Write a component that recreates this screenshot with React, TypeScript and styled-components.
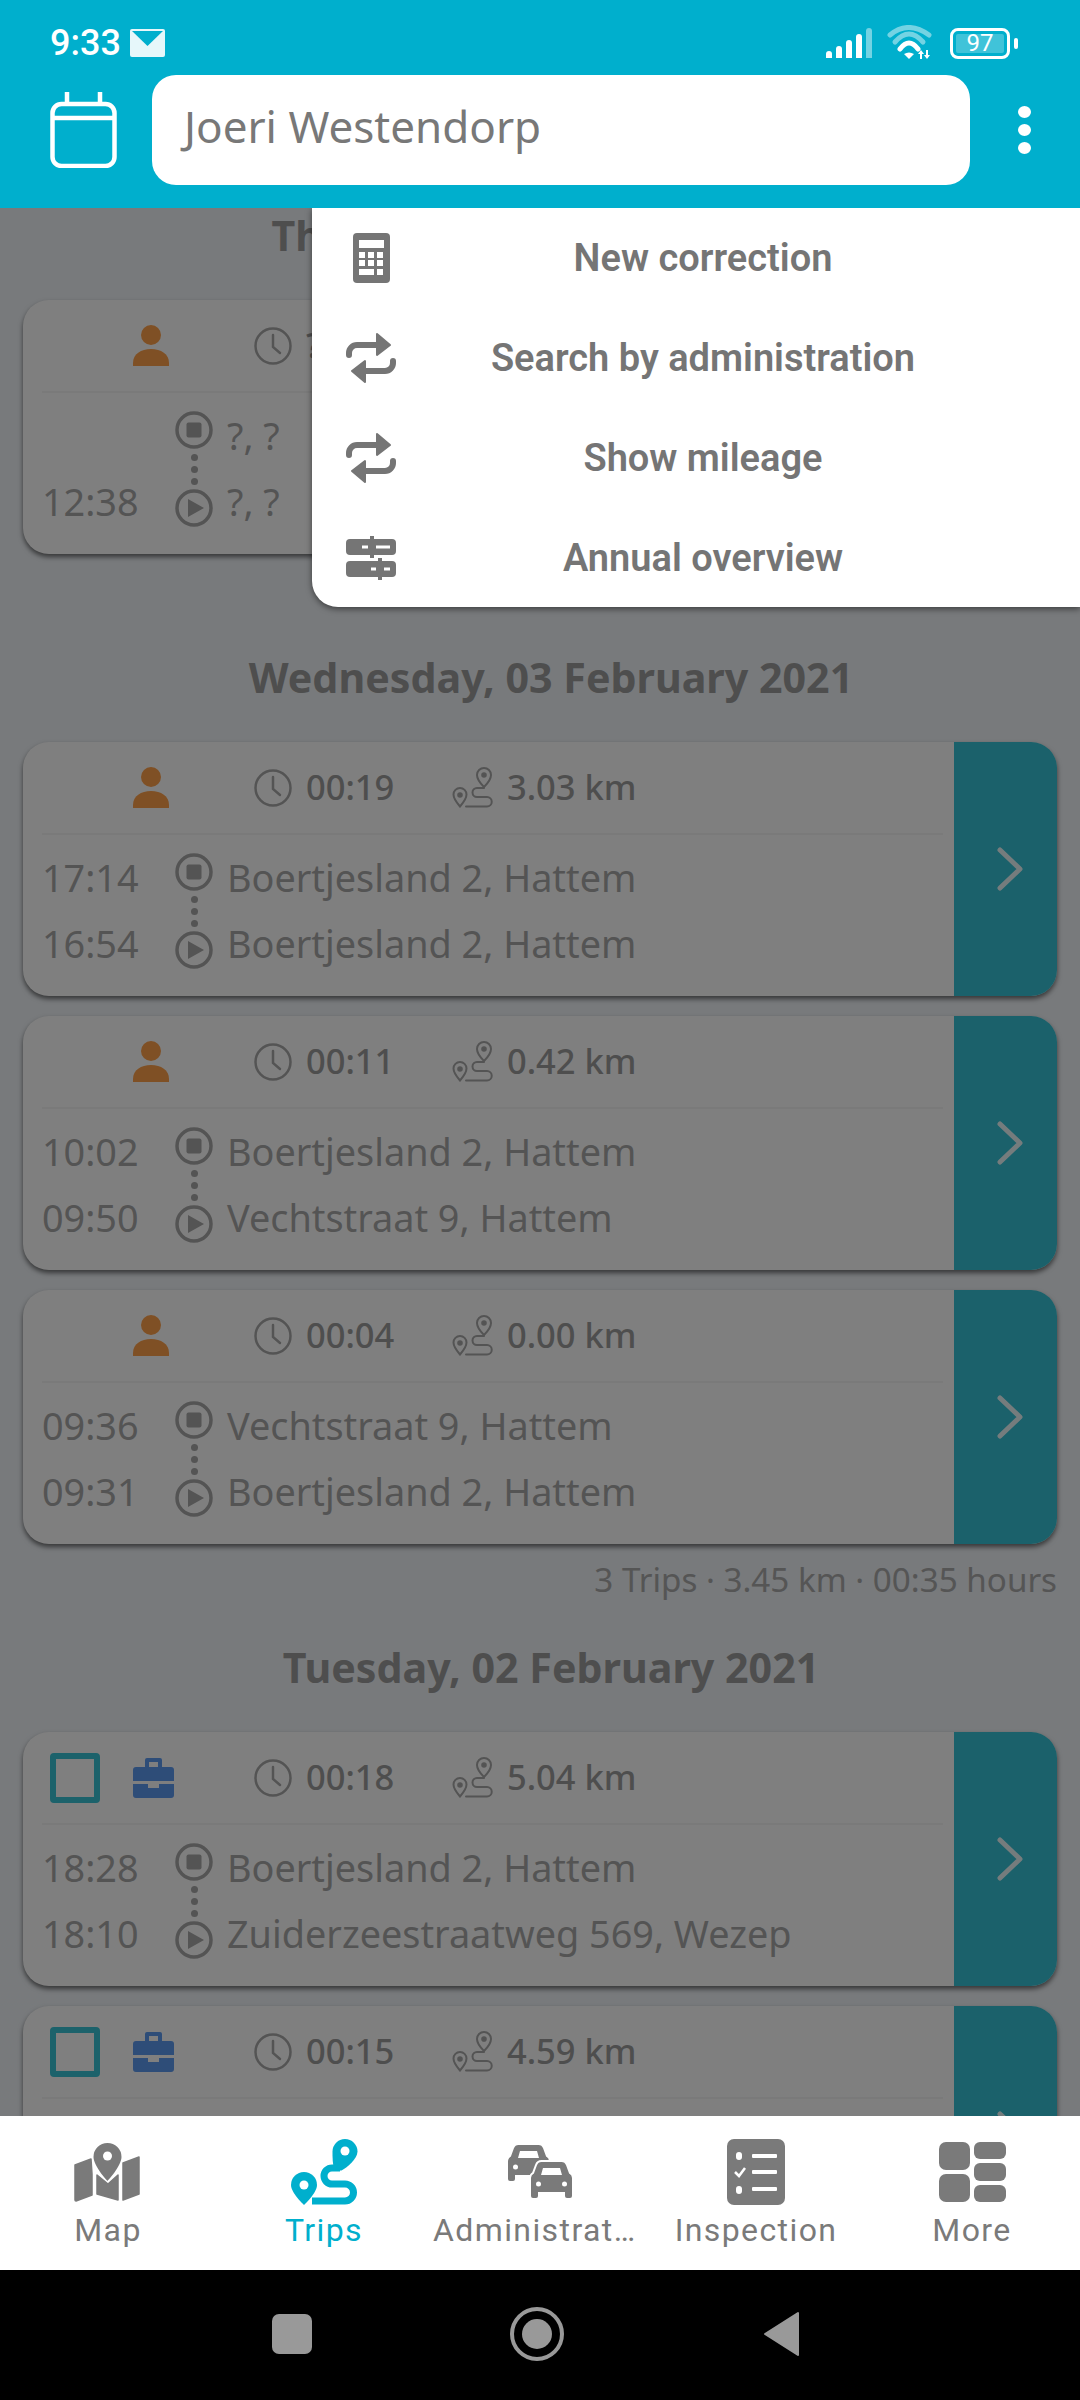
import styled, { createGlobalStyle } from 'styled-components';

const GlobalStyle = createGlobalStyle`
  * { box-sizing: border-box; }
  html, body { margin: 0; padding: 0; background: #000; }
`;

const Screen = styled.div`
  width: 1080px;
  height: 2400px;
  display: flex;
  flex-direction: column;
  overflow: hidden;
  font-family: "Noto Sans", "Open Sans", sans-serif;
`;

/* header */
const Header = styled.header`
  height: 208px;
  flex: none;
  background: #00afcd;
  color: #fff;
`;

const StatusBar = styled.div`
  height: 75px;
  display: flex;
  align-items: center;
  padding: 11px 70px 0 50px;
  font-family: Roboto, sans-serif;
  font-weight: 500;
  font-size: 36px;

  .clock { margin-right: 9px; }
  .spacer { flex: 1; }
`;

const SignalBars = styled.div`
  display: flex;
  align-items: flex-end;
  gap: 4px;
  height: 30px;
  margin-right: 14px;
`;

const Bar = styled.i<{ $h: number; $dim?: boolean }>`
  width: 6px;
  height: ${(p) => p.$h}px;
  border-radius: 3px 3px 0 0;
  background: ${(p) => (p.$dim ? 'rgba(255,255,255,0.45)' : '#fff')};
`;

const Battery = styled.div`
  position: relative;
  width: 60px;
  height: 31px;
  margin-left: 14px;
  padding: 3px;
  border: 3px solid #fff;
  border-radius: 8px;

  &::after {
    content: '';
    position: absolute;
    right: -11px;
    top: 7px;
    width: 4px;
    height: 11px;
    border-radius: 2px;
    background: #fff;
  }
`;

const BatteryLevel = styled.div`
  height: 100%;
  background: rgba(255, 255, 255, 0.25);
  border-radius: 2px;
  text-align: center;
  font-size: 24px;
  line-height: 19px;
  font-weight: 400;
`;

const Toolbar = styled.div`
  height: 110px;
  display: flex;
  align-items: center;
  padding-left: 50px;
`;

const SearchBox = styled.div`
  width: 818px;
  height: 110px;
  margin-left: 35px;
  padding: 0 0 8px 32px;
  display: flex;
  align-items: center;
  background: #fff;
  border-radius: 24px;
  color: #787878;
  font-size: 44px;
`;

const Kebab = styled.div`
  margin-left: 48px;
  display: flex;
  flex-direction: column;
  gap: 6px;

  i {
    display: block;
    width: 13px;
    height: 12px;
    border-radius: 50%;
    background: #fff;
  }
`;

/* trip list */
const Body = styled.main`
  position: relative;
  flex: 1;
  min-height: 0;
  overflow: hidden;
  background: #f0f4f8;
`;

const TripList = styled.div`
  margin-top: -1px;
`;

const DayTitle = styled.h2`
  margin: 0 0 33px;
  padding-left: 22px;
  height: 60px;
  line-height: 56px;
  text-align: center;
  font-size: 41.2px;
  font-weight: 700;
  color: #9c9c9c;
`;

const DaySummary = styled.div`
  height: 75px;
  padding-right: 23px;
  line-height: 32px;
  text-align: right;
  font-size: 33.2px;
  color: #aaa;
`;

const Card = styled.article`
  height: 254px;
  margin: 0 23px 20px;
  display: flex;
  overflow: hidden;
  background: #fff;
  border-radius: 26px;
  box-shadow: 0 3px 5px rgba(0, 0, 0, 0.55);
`;

const CardMain = styled.div`
  flex: 1;
  min-width: 0;
`;

const CardTop = styled.div`
  height: 91px;
  display: flex;
  align-items: center;
  padding-left: 27px;
`;

const CheckSlot = styled.div`
  width: 50px;
  height: 50px;
  margin-right: 33px;
`;

const CheckBox = styled.div`
  width: 50px;
  height: 50px;
  border: 6px solid #38c4d6;
  border-radius: 4px;
`;

const TypeSlot = styled.div`
  width: 41px;
  margin-right: 80px;
  display: flex;
`;

const Stat = styled.span<{ $width?: number }>`
  width: ${(p) => (p.$width ? `${p.$width}px` : 'auto')};
  margin: 0 0 2px 14px;
  font-size: 34.5px;
  font-weight: 500;
  color: #9c9c9c;
  white-space: nowrap;
`;

const Divider = styled.div`
  height: 2px;
  margin: 0 11px 0 19px;
  background: #f5f5f5;
`;

const Route = styled.div`
  display: grid;
  grid-template-columns: 133px 38px 1fr;
  grid-template-rows: 66px 66px;
  padding: 9px 0 0 19px;
  font-size: 37.8px;
  color: #a8a8a8;
`;

const RouteCell = styled.div`
  display: flex;
  align-items: center;
  white-space: nowrap;
`;

const Address = styled(RouteCell)`
  padding-left: 14px;
`;

const Markers = styled.div`
  grid-column: 2;
  grid-row: 1 / span 2;
  padding-top: 9px;
  display: flex;
  flex-direction: column;
  align-items: center;
  color: #a8a8a8;
`;

const Dots = styled.div`
  height: 40px;
  display: flex;
  flex-direction: column;
  justify-content: center;
  gap: 5px;

  i {
    display: block;
    width: 7px;
    height: 7px;
    border-radius: 50%;
    background: currentColor;
  }
`;

const CardAction = styled.div`
  width: 103px;
  flex: none;
  display: flex;
  align-items: center;
  justify-content: center;
  padding-left: 8px;
  background: #36c2d6;
  color: #fff;
`;

/* dim layer and menu */
const Scrim = styled.div`
  position: absolute;
  inset: 0;
  background: rgba(0, 0, 0, 0.5);
`;

const Menu = styled.nav`
  position: absolute;
  top: 0;
  right: 0;
  width: 768px;
  height: 399px;
  background: #fff;
  border-radius: 0 0 0 26px;
  box-shadow: 0 2px 6px rgba(0, 0, 0, 0.5);
`;

const MenuItem = styled.div`
  height: 100px;
  display: flex;
  align-items: center;
  padding: 0 70px 0 34px;
  font-family: Roboto, sans-serif;
  font-weight: 600;
  font-size: 38px;
  color: #757575;

  svg { flex: none; }
`;

const MenuLabel = styled.span`
  flex: 1;
  text-align: center;
`;

/* bottom */
const TabBar = styled.div`
  height: 154px;
  flex: none;
  display: grid;
  grid-template-columns: repeat(5, 216px);
  background: #fff;
`;

const Tab = styled.div<{ $active?: boolean }>`
  min-width: 0;
  padding-top: 22px;
  display: flex;
  flex-direction: column;
  align-items: center;
  color: ${(p) => (p.$active ? '#00afcd' : '#7a7a7a')};
`;

const TabIcon = styled.div`
  height: 68px;
  display: flex;
  align-items: center;
`;

const TabLabel = styled.div<{ $clipped?: boolean }>`
  max-width: 205px;
  margin-top: 3px;
  margin-left: ${(p) => (p.$clipped ? '1px' : '0')};
  align-self: ${(p) => (p.$clipped ? 'flex-start' : 'center')};
  font-family: Roboto, sans-serif;
  font-size: 32px;
  line-height: 42px;
  letter-spacing: 1.4px;
  white-space: nowrap;
  overflow: hidden;
  text-overflow: ellipsis;
`;

const NavBar = styled.div`
  height: 130px;
  flex: none;
  background: #000;
  display: grid;
  grid-template-columns: 272px 40px 198px 54px 199px 36px;
  align-items: center;
  padding-bottom: 3px;
  color: #999;

  & > :nth-child(1) { grid-column: 2; }
  & > :nth-child(2) { grid-column: 4; }
  & > :nth-child(3) { grid-column: 6; }
`;

const NavSquare = styled.div`
  width: 40px;
  height: 40px;
  border-radius: 7px;
  background: #999;
`;

/* icons */
const CalendarIcon = () => (
  <svg width="67" height="76" viewBox="0 0 67 76" fill="none" stroke="#fff" strokeWidth="4.5">
    <rect x="2.5" y="12" width="62" height="62" rx="9" />
    <path d="M3 26h61M17 0v12M50 0v12" />
  </svg>
);

const MailIcon = () => (
  <svg width="35" height="28" viewBox="0 0 35 28">
    <path d="M2 0h31a2 2 0 0 1 2 2v24a2 2 0 0 1-2 2H2a2 2 0 0 1-2-2V2a2 2 0 0 1 2-2z" fill="#e6f7fa" />
    <path d="M2 2h31L17.500 17z" fill="#00afcd" />
  </svg>
);

const WifiIcon = () => (
  <svg width="50" height="36" viewBox="0 0 50 36" fill="none" stroke="#fff" strokeWidth="5" strokeLinecap="round">
    <path d="M4 10Q22-5 43 10" opacity="0.45" />
    <path d="M9 17Q23 1 37 17" opacity="0.45" />
    <path d="M14 24Q23 12 32 24" />
    <path d="M23 34l-5-5q5-3 10 0z" fill="#fff" stroke="none" />
    <path d="M35 25l-3 4h6zM41 34l-3-4h6z" fill="#fff" stroke="none" />
    <path d="M35 29v5M41 25v5" strokeWidth="2" strokeLinecap="butt" />
  </svg>
);

const PersonIcon = () => (
  <svg width="36" height="41" viewBox="0 0 36 41" fill="#ffa04a">
    <circle cx="18" cy="10" r="10" />
    <path d="M0 38c0-9 8-14 18-14s18 5 18 14v3H0z" />
  </svg>
);

const BriefcaseIcon = () => (
  <svg width="41" height="40" viewBox="0 0 41 40">
    <path
      fill="#5c9af0"
      fillRule="evenodd"
      d="M12 2a2 2 0 0 1 2-2h13a2 2 0 0 1 2 2v7h9a3 3 0 0 1 3 3v11H0V12a3 3 0 0 1 3-3h9zm4 2v5h9V4zM0 26h15v4h11v-4h15v11a3 3 0 0 1-3 3H3a3 3 0 0 1-3-3z"
    />
  </svg>
);

const ClockIcon = () => (
  <svg width="38" height="38" viewBox="0 0 38 38" fill="none" stroke="#a8a8a8" strokeWidth="2.500" strokeLinecap="round">
    <circle cx="19" cy="19" r="17.500" />
    <path d="M19 8v12l7 6" />
  </svg>
);

const RouteIcon = () => (
  <svg width="41" height="41" viewBox="0 0 41 41" fill="none" stroke="#a8a8a8" strokeWidth="2">
    <path d="M32 1a7 7 0 0 1 7 7c0 5-7 12-7 12s-7-7-7-12a7 7 0 0 1 7-7z" />
    <circle cx="32" cy="8" r="1.800" fill="#a8a8a8" />
    <path d="M8 21a6.500 6.500 0 0 1 6.500 6.500c0 4.500-6.500 12-6.500 12s-6.500-7.500-6.500-12A6.500 6.500 0 0 1 8 21z" />
    <circle cx="8" cy="28" r="1.800" fill="#a8a8a8" />
    <path d="M32 21h-7a4.500 4.500 0 0 0 0 9h10a4.500 4.500 0 0 1 0 9.500H14" strokeLinecap="round" />
  </svg>
);

const StopMarker = () => (
  <svg width="38" height="38" viewBox="0 0 38 38">
    <circle cx="19" cy="19" r="17" fill="none" stroke="currentColor" strokeWidth="3.500" />
    <rect x="11.500" y="11.500" width="15" height="15" rx="2" fill="currentColor" />
  </svg>
);

const PlayMarker = () => (
  <svg width="38" height="38" viewBox="0 0 38 38">
    <circle cx="19" cy="19" r="17" fill="none" stroke="currentColor" strokeWidth="3.500" />
    <path d="M13 10l16 9-16 9z" fill="currentColor" />
  </svg>
);

const Chevron = () => (
  <svg width="26" height="44" viewBox="0 0 26 44" fill="none" stroke="currentColor" strokeWidth="5" strokeLinecap="round" strokeLinejoin="round" opacity="0.9">
    <path d="M3 3l20 19-20 19" />
  </svg>
);

const CalculatorIcon = () => (
  <svg width="50" height="50" viewBox="0 0 50 50">
    <rect x="7" y="0" width="37" height="50" rx="4" fill="#757575" />
    <g fill="#fff">
      <rect x="13" y="7" width="25" height="8" />
      {[19, 27].map((y) => [13, 22, 31].map((x) => <rect key={`${x}${y}`} x={x} y={y} width="6" height="6" />))}
      <rect x="13" y="36" width="15" height="6" />
      <rect x="31" y="36" width="6" height="6" />
    </g>
  </svg>
);

const RepeatIcon = () => (
  <svg width="50" height="50" viewBox="0 0 50 50">
    <g fill="none" stroke="#757575" strokeWidth="6" strokeLinecap="round">
      <path d="M3 22v-2a8 8 0 0 1 8-8h24" />
      <path d="M47 28v2a8 8 0 0 1-8 8H15" />
    </g>
    <path d="M31 1l13 11-13 10z" fill="#757575" stroke="#757575" strokeWidth="2" strokeLinejoin="round" />
    <path d="M19 49L6 38l13-10z" fill="#757575" stroke="#757575" strokeWidth="2" strokeLinejoin="round" />
  </svg>
);

const SlidersIcon = () => (
  <svg width="50" height="44" viewBox="0 0 50 44">
    <rect x="0" y="3" width="50" height="16" rx="4" fill="#757575" />
    <rect x="0" y="25" width="50" height="16" rx="4" fill="#757575" />
    <rect x="24" y="0" width="4" height="22" fill="#757575" />
    <rect x="32" y="22" width="4" height="22" fill="#757575" />
    <g fill="#fff">
      <rect x="16" y="9.500" width="6" height="3" />
      <rect x="30" y="9.500" width="14" height="3" />
      <rect x="25" y="31.500" width="5" height="3" />
      <rect x="38" y="31.500" width="6" height="3" />
    </g>
  </svg>
);

const MapIcon = () => (
  <svg width="68" height="60" viewBox="0 0 68 60" fill="currentColor" stroke="currentColor" strokeWidth="1.500" strokeLinejoin="round">
    <path d="M1 23l16-6 1 15v21L2 59a1 1 0 0 1-1-1z" />
    <path d="M23 33l11 9 10-9v25l-21-6z" />
    <path d="M49 21l16-6v37l-16 6z" />
    <path d="M33.500 1A14 14 0 0 1 47.500 15c0 9-14 24-14 24S19.500 24 19.500 15A14 14 0 0 1 33.500 1z" stroke="none" />
    <circle cx="33.500" cy="14" r="4.500" fill="#fff" stroke="none" />
  </svg>
);

const TripsIcon = () => (
  <svg width="68" height="67" viewBox="0 0 68 67" fill="currentColor">
    <path d="M55 0a12.500 12.500 0 0 1 12.500 12.500c0 7-10 16-16 19h-7c-2-6-2-13-2-19A12.500 12.500 0 0 1 55 0z" />
    <circle cx="55" cy="12" r="4.500" fill="#fff" />
    <path d="M14 33a13 13 0 0 1 13 13c0 8-13 20-13 20S1 54 1 46a13 13 0 0 1 13-13z" />
    <circle cx="14" cy="46" r="4.500" fill="#fff" />
    <path d="M50 29H42a8 8 0 0 0 0 16H55a8.500 8.500 0 0 1 0 17H22" fill="none" stroke="currentColor" strokeWidth="7" />
  </svg>
);

const Car = ({ x, y }: { x: number; y: number }) => (
  <g transform={`translate(${x} ${y})`}>
    <path
      d="M12 0h19a6 6 0 0 1 6 4l3 8a6 6 0 0 1 3 5v18a3 3 0 0 1-3 3h-3a3 3 0 0 1-3-3v-3H9v3a3 3 0 0 1-3 3H3a3 3 0 0 1-3-3V17a6 6 0 0 1 3-5l3-8a6 6 0 0 1 6-4z"
      stroke="#fff"
      strokeWidth="2"
    />
    <path d="M13 7h17l2 7H11z" fill="#fff" />
    <circle cx="8.500" cy="23" r="2.500" fill="#fff" />
    <circle cx="34.500" cy="23" r="2.500" fill="#fff" />
  </g>
);

const CarsIcon = () => (
  <svg width="68" height="56" viewBox="0 0 68 56" fill="currentColor">
    <Car x={1} y={0} />
    <Car x={24} y={17} />
  </svg>
);

const InspectionIcon = () => (
  <svg width="58" height="66" viewBox="0 0 58 66">
    <rect width="58" height="66" rx="7" fill="currentColor" />
    <g fill="#fff">
      <rect x="9" y="13" width="6" height="8" rx="3" />
      <rect x="9" y="47" width="6" height="8" rx="3" />
      <rect x="25" y="15" width="25" height="4" rx="1" />
      <rect x="25" y="31" width="25" height="4" rx="1" />
      <rect x="25" y="48" width="25" height="4" rx="1" />
    </g>
    <path d="M8 33l4 4 6-8" fill="none" stroke="#fff" strokeWidth="2.500" />
  </svg>
);

const MoreIcon = () => (
  <svg width="67" height="60" viewBox="0 0 67 60" fill="currentColor">
    <rect x="0" y="0" width="31" height="28" rx="7" />
    <rect x="0" y="32" width="31" height="28" rx="7" />
    <rect x="35" y="0" width="32" height="17" rx="6" />
    <rect x="35" y="21" width="32" height="18" rx="6" />
    <rect x="35" y="43" width="32" height="17" rx="6" />
  </svg>
);

const HomeButton = () => (
  <svg width="54" height="54" viewBox="0 0 54 54">
    <circle cx="27" cy="27" r="25" fill="none" stroke="#999" strokeWidth="4" />
    <circle cx="27" cy="27" r="15" fill="#999" />
  </svg>
);

const BackButton = () => (
  <svg width="36" height="46" viewBox="0 0 36 46">
    <path d="M35 2v42L2 23z" fill="#999" stroke="#999" strokeWidth="2" strokeLinejoin="round" />
  </svg>
);

type Trip = {
  business?: boolean;
  duration: string;
  distance: string;
  stops?: { end: string; endAt: string; start: string; startAt: string };
};

type Day = { title: string; summary?: string; trips: Trip[] };

const days: Day[] = [
  {
    title: 'Thursday, 04 February 2021',
    trips: [{ duration: '?:??', distance: '? km', stops: { end: '?, ?', endAt: '', start: '?, ?', startAt: '12:38' } }],
  },
  {
    title: 'Wednesday, 03 February 2021',
    summary: '3 Trips · 3.45 km · 00:35 hours',
    trips: [
      {
        duration: '00:19',
        distance: '3.03 km',
        stops: { end: 'Boertjesland 2, Hattem', endAt: '17:14', start: 'Boertjesland 2, Hattem', startAt: '16:54' },
      },
      {
        duration: '00:11',
        distance: '0.42 km',
        stops: { end: 'Boertjesland 2, Hattem', endAt: '10:02', start: 'Vechtstraat 9, Hattem', startAt: '09:50' },
      },
      {
        duration: '00:04',
        distance: '0.00 km',
        stops: { end: 'Vechtstraat 9, Hattem', endAt: '09:36', start: 'Boertjesland 2, Hattem', startAt: '09:31' },
      },
    ],
  },
  {
    title: 'Tuesday, 02 February 2021',
    trips: [
      {
        business: true,
        duration: '00:18',
        distance: '5.04 km',
        stops: { end: 'Boertjesland 2, Hattem', endAt: '18:28', start: 'Zuiderzeestraatweg 569, Wezep', startAt: '18:10' },
      },
      { business: true, duration: '00:15', distance: '4.59 km' },
    ],
  },
];

const menuItems = [
  { label: 'New correction', icon: <CalculatorIcon /> },
  { label: 'Search by administration', icon: <RepeatIcon /> },
  { label: 'Show mileage', icon: <RepeatIcon /> },
  { label: 'Annual overview', icon: <SlidersIcon /> },
];

const tabs = [
  { label: 'Map', icon: <MapIcon /> },
  { label: 'Trips', icon: <TripsIcon />, active: true },
  { label: 'Administration', icon: <CarsIcon />, clipped: true },
  { label: 'Inspection', icon: <InspectionIcon /> },
  { label: 'More', icon: <MoreIcon /> },
];

function TripCard({ trip }: { trip: Trip }) {
  return (
    <Card>
      <CardMain>
        <CardTop>
          <CheckSlot>{trip.business && <CheckBox />}</CheckSlot>
          <TypeSlot>{trip.business ? <BriefcaseIcon /> : <PersonIcon />}</TypeSlot>
          <ClockIcon />
          <Stat $width={146}>{trip.duration}</Stat>
          <RouteIcon />
          <Stat>{trip.distance}</Stat>
        </CardTop>
        <Divider />
        {trip.stops && (
          <Route>
            <RouteCell>{trip.stops.endAt}</RouteCell>
            <Markers>
              <StopMarker />
              <Dots>
                <i />
                <i />
                <i />
              </Dots>
              <PlayMarker />
            </Markers>
            <Address>{trip.stops.end}</Address>
            <RouteCell>{trip.stops.startAt}</RouteCell>
            <Address>{trip.stops.start}</Address>
          </Route>
        )}
      </CardMain>
      <CardAction>
        <Chevron />
      </CardAction>
    </Card>
  );
}

export default function App() {
  return (
    <Screen>
      <GlobalStyle />
      <Header>
        <StatusBar>
          <span className="clock">9:33</span>
          <MailIcon />
          <span className="spacer" />
          <SignalBars>
            <Bar $h={7} />
            <Bar $h={12} />
            <Bar $h={18} />
            <Bar $h={24} />
            <Bar $h={30} $dim />
          </SignalBars>
          <WifiIcon />
          <Battery>
            <BatteryLevel>97</BatteryLevel>
          </Battery>
        </StatusBar>
        <Toolbar>
          <CalendarIcon />
          <SearchBox>Joeri Westendorp</SearchBox>
          <Kebab>
            <i />
            <i />
            <i />
          </Kebab>
        </Toolbar>
      </Header>
      <Body>
        <TripList>
          {days.map((day) => (
            <section key={day.title}>
              <DayTitle>{day.title}</DayTitle>
              {day.trips.map((trip, i) => (
                <TripCard key={i} trip={trip} />
              ))}
              <DaySummary>{day.summary}</DaySummary>
            </section>
          ))}
        </TripList>
        <Scrim />
        <Menu>
          {menuItems.map((item) => (
            <MenuItem key={item.label}>
              {item.icon}
              <MenuLabel>{item.label}</MenuLabel>
            </MenuItem>
          ))}
        </Menu>
      </Body>
      <TabBar>
        {tabs.map((tab) => (
          <Tab key={tab.label} $active={tab.active}>
            <TabIcon>{tab.icon}</TabIcon>
            <TabLabel $clipped={tab.clipped}>{tab.label}</TabLabel>
          </Tab>
        ))}
      </TabBar>
      <NavBar>
        <NavSquare />
        <HomeButton />
        <BackButton />
      </NavBar>
    </Screen>
  );
}
